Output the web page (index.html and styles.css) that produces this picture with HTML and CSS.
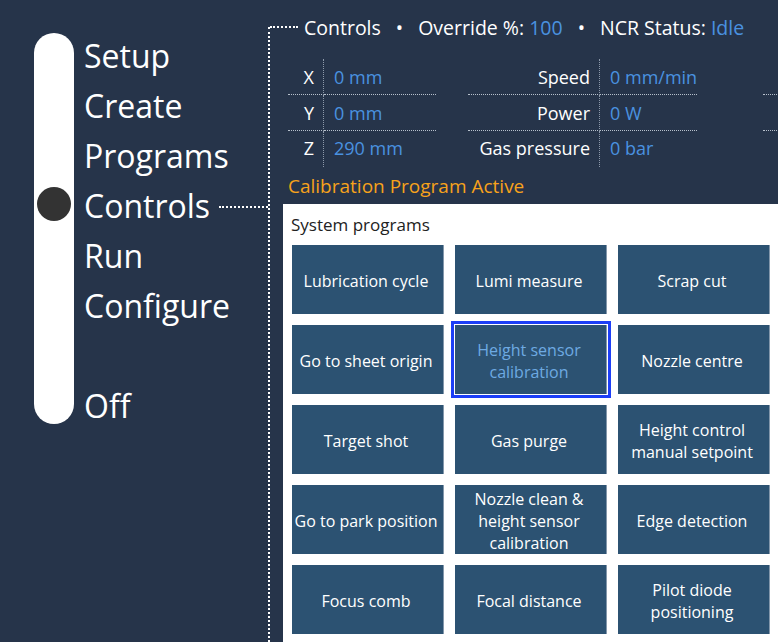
FILE: index.html
```html
<!DOCTYPE html>
<html lang="en">
<head>
<meta charset="utf-8">
<title>Controls</title>
<link rel="stylesheet" href="styles.css">
</head>
<body>
<div class="app">
  <nav class="nav">
    <div class="track"><span class="knob"></span></div>
    <ul class="menu">
      <li>Setup</li>
      <li>Create</li>
      <li>Programs</li>
      <li class="active">Controls</li>
      <li>Run</li>
      <li>Configure</li>
      <li class="spacer"></li>
      <li>Off</li>
    </ul>
  </nav>
  <main class="main">
    <header class="status">
      <span>Controls</span>
      <span class="dot">•</span>
      <span>Override %: <span class="val">100</span></span>
      <span class="dot">•</span>
      <span>NCR Status: <span class="val">Idle</span></span>
    </header>
    <div class="readouts">
      <div class="group g1">
        <div class="k">X</div><div class="v">0 mm</div>
        <div class="k">Y</div><div class="v">0 mm</div>
        <div class="k last">Z</div><div class="v last">290 mm</div>
      </div>
      <div class="group g2">
        <div class="k">Speed</div><div class="v">0 mm/min</div>
        <div class="k">Power</div><div class="v">0 W</div>
        <div class="k last">Gas pressure</div><div class="v last">0 bar</div>
      </div>
      <div class="group g3">
        <div class="k"></div><div class="v"></div>
        <div class="k"></div><div class="v"></div>
        <div class="k last"></div><div class="v last"></div>
      </div>
    </div>
    <div class="notice">Calibration Program Active</div>
    <section class="panel">
      <h2 class="panel-title">System programs</h2>
      <div class="grid">
        <button class="btn">Lubrication cycle</button>
        <button class="btn">Lumi measure</button>
        <button class="btn">Scrap cut</button>
        <button class="btn">Go to sheet origin</button>
        <button class="btn selected">Height sensor<br>calibration</button>
        <button class="btn">Nozzle centre</button>
        <button class="btn">Target shot</button>
        <button class="btn">Gas purge</button>
        <button class="btn">Height control<br>manual setpoint</button>
        <button class="btn">Go to park position</button>
        <button class="btn">Nozzle clean &amp;<br>height sensor<br>calibration</button>
        <button class="btn">Edge detection</button>
        <button class="btn">Focus comb</button>
        <button class="btn">Focal distance</button>
        <button class="btn">Pilot diode<br>positioning</button>
      </div>
    </section>
  </main>
</div>
</body>
</html>
```
FILE: styles.css
```css
html, body {
  margin: 0;
  padding: 0;
}
body {
  width: 778px;
  height: 642px;
  overflow: hidden;
  background: #26344a;
  font-family: "Open Sans", "Noto Sans", sans-serif;
  color: #ffffff;
}
.app {
  display: flex;
  width: 778px;
  height: 642px;
  overflow: hidden;
}
.nav {
  flex: 0 0 268px;
  display: flex;
  align-items: flex-start;
}
.track {
  position: relative;
  flex: 0 0 40px;
  height: 391px;
  margin: 33px 0 0 34px;
  background: #ffffff;
  border-radius: 20px;
}
.knob {
  position: absolute;
  left: 3px;
  top: 154px;
  width: 34px;
  height: 34px;
  border-radius: 50%;
  background: #333333;
}
.menu {
  list-style: none;
  margin: 31px 0 0 10px;
  padding: 0;
  flex: 1;
  font-size: 32px;
  line-height: 50px;
}
.menu li {
  height: 50px;
  display: flex;
  align-items: center;
}
.menu li.active::after {
  content: "";
  flex: 1;
  margin-left: 9px;
  margin-top: 1px;
  border-top: 2px dotted #ffffff;
}
.main {
  flex: 1;
  margin-top: 27px;
  border-left: 2px dotted #ffffff;
  display: flex;
  flex-direction: column;
  min-width: 0;
}
.status {
  display: flex;
  align-items: center;
  height: 26px;
  margin-top: -13px;
  font-size: 19.5px;
  white-space: nowrap;
}
.status::before {
  content: "";
  width: 28px;
  margin-right: 6px;
  border-top: 2px dotted #ffffff;
}
.status .dot {
  margin: 0 15px;
}
.val {
  color: #4a92e0;
}
.readouts {
  display: flex;
  margin: 19px 0 0 18px;
  font-size: 18px;
  white-space: nowrap;
}
.group {
  display: grid;
  grid-auto-rows: 36px;
  flex: none;
}
.g1 {
  grid-template-columns: 36px 112px;
  margin-right: 32px;
}
.g2 {
  grid-template-columns: 132px 97px;
  margin-right: 66px;
}
.g3 {
  grid-template-columns: 60px 60px;
}
.k, .v {
  display: flex;
  align-items: center;
  border-bottom: 1px dotted #b7c0cc;
}
.k.last, .v.last {
  border-bottom: none;
  padding-bottom: 3px;
}
.k {
  justify-content: flex-end;
  padding-right: 9px;
  border-right: 1px dotted #8d99aa;
}
.v {
  padding-left: 10px;
  color: #4a92e0;
}
.notice {
  margin: 8px 0 0 18px;
  font-size: 19px;
  line-height: 22px;
  color: #f7a21b;
}
.panel {
  margin: 7px 0 0 13px;
  background: #ffffff;
  color: #222222;
  padding: 10px 0 0 9px;
  flex: 1;
  width: 500px;
}
.panel-title {
  margin: 0 0 9px -1px;
  font-size: 17px;
  font-weight: normal;
  line-height: 22px;
}
.grid {
  display: grid;
  grid-template-columns: repeat(3, 152px);
  grid-auto-rows: 69px;
  column-gap: 11px;
  row-gap: 11px;
}
.btn {
  font-family: inherit;
  font-size: 16px;
  line-height: 22px;
  color: #ffffff;
  background: #2c5272;
  border: none;
  border-right: 1px solid #8397ab;
  padding: 2px 3px 0 0;
  margin: 0;
  text-align: center;
}
.btn.selected {
  color: #6eaae2;
  outline: 3px solid #1c3ef7;
  outline-offset: 1px;
}
```
